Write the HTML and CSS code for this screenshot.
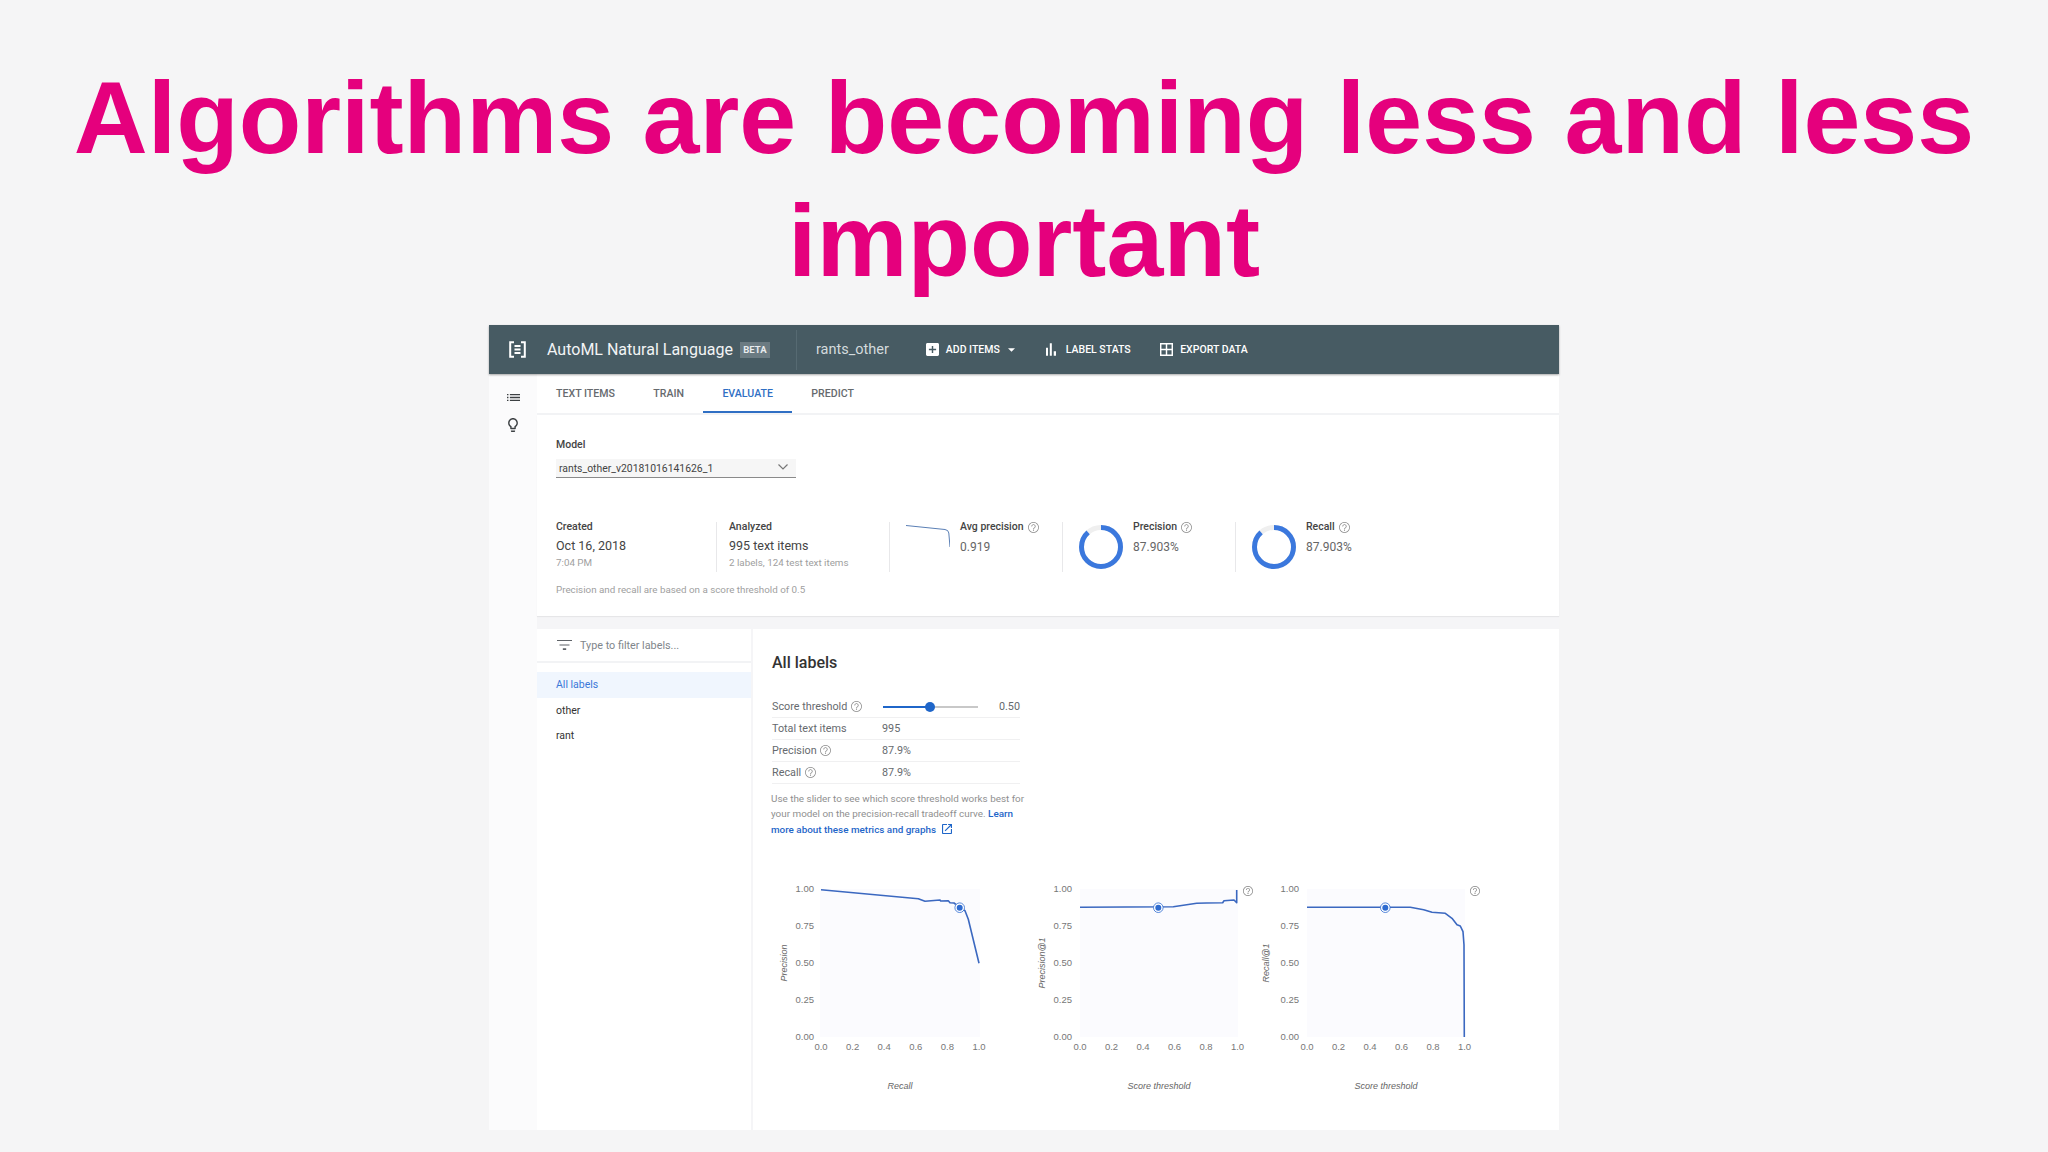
FILE: index.html
```html
<!DOCTYPE html>
<html lang="en">
<head>
<meta charset="utf-8">
<title>Algorithms are becoming less and less important</title>
<link rel="stylesheet" href="styles.css">
</head>
<body>
<svg class="defs" width="0" height="0" aria-hidden="true">
  <symbol id="help" viewBox="0 0 24 24"><path d="M11 18h2v-2h-2v2zm1-16C6.48 2 2 6.48 2 12s4.48 10 10 10 10-4.48 10-10S17.52 2 12 2zm0 18.6c-4.7 0-8.6-3.9-8.600-8.600S7.300 3.400 12 3.400s8.600 3.900 8.600 8.600-3.900 8.600-8.600 8.600zM12 6c-2.210 0-4 1.790-4 4h1.500c0-1.400 1.100-2.500 2.500-2.500s2.500 1.100 2.500 2.500c0 2-3.250 2-3.250 5h1.500c0-2.250 3.250-2.500 3.250-5 0-2.210-1.790-4-4-4z"/></symbol>
</svg>
<h1 class="title">Algorithms are becoming less and less important</h1>
<div class="app">
  <header class="topbar">
    <svg class="logo" viewBox="0 0 17 17"><path d="M5 1.200H1.200v14.600H5M12 1.200h3.800v14.600H12M5.500 5h6M5.500 8.500h6M5.500 12h6"/></svg>
    <span class="product">AutoML Natural Language</span>
    <span class="badge">BETA</span>
    <span class="project">rants_other</span>
    <span class="action action-add">
      <svg class="icon-add" viewBox="3 3 18 18"><path d="M19 3H5c-1.110 0-2 .9-2 2v14c0 1.100.89 2 2 2h14c1.100 0 2-.9 2-2V5c0-1.100-.9-2-2-2zm-2 10h-4v4h-2v-4H7v-2h4V7h2v4h4v2z"/></svg>
      ADD ITEMS
      <svg class="caret" viewBox="0 0 8 4"><path d="M0 0h8L4 4z"/></svg>
    </span>
    <span class="action action-stats">
      <svg class="icon-stats" viewBox="0 0 11 14"><path d="M0 5h2.200v9H0zM4.200 0h2.200v14H4.200zM8.500 9H11v5H8.500z"/></svg>
      LABEL STATS
    </span>
    <span class="action action-export">
      <svg class="icon-export" viewBox="3 3 18 18"><path d="M3 3v18h18V3H3zm8 16H5v-6h6v6zm0-8H5V5h6v6zm8 8h-6v-6h6v6zm0-8h-6V5h6v6z"/></svg>
      EXPORT DATA
    </span>
  </header>
  <div class="shell">
    <aside class="rail">
      <svg class="rail-icon" viewBox="3 6 18 12"><path d="M3 13h2v-2H3v2zm0 4h2v-2H3v2zm0-8h2V7H3v2zm4 4h14v-2H7v2zm0 4h14v-2H7v2zM7 7v2h14V7H7z"/></svg>
      <svg class="rail-bulb" viewBox="5 2 14 20"><path d="M9 21c0 .55.45 1 1 1h4c.55 0 1-.45 1-1v-1H9v1zm3-19C8.140 2 5 5.140 5 9c0 2.380 1.190 4.470 3 5.740V17c0 .55.45 1 1 1h6c.55 0 1-.45 1-1v-2.260c1.810-1.270 3-3.360 3-5.740 0-3.860-3.140-7-7-7zm2.850 11.100l-.85.6V16h-4v-2.300l-.85-.6C7.800 12.160 7 10.630 7 9c0-2.760 2.240-5 5-5s5 2.240 5 5c0 1.630-.8 3.160-2.150 4.100z"/></svg>
    </aside>
    <main class="content">
      <nav class="tabs">
        <span class="tab">TEXT ITEMS</span>
        <span class="tab">TRAIN</span>
        <span class="tab tab-active">EVALUATE</span>
        <span class="tab">PREDICT</span>
      </nav>
      <section class="summary">
        <div class="field-label">Model</div>
        <div class="select">
          <span>rants_other_v20181016141626_1</span>
          <svg class="chevron" viewBox="0 0 10 6"><path d="M.5.5 5 5 9.500.5"/></svg>
        </div>
        <div class="stats">
          <div class="stat stat-first">
            <div class="stat-label">Created</div>
            <div class="stat-value">Oct 16, 2018</div>
            <div class="stat-sub">7:04 PM</div>
          </div>
          <div class="stat stat-text">
            <div class="stat-label">Analyzed</div>
            <div class="stat-value">995 text items</div>
            <div class="stat-sub">2 labels, 124 test text items</div>
          </div>
          <div class="stat stat-graphic">
            <svg class="spark" viewBox="0 0 44 22"><path d="M0 .5 39 4.500Q42.500 5 42.800 8L44 22"/></svg>
            <div>
              <div class="stat-label">Avg precision <svg class="help"><use href="#help"/></svg></div>
              <div class="stat-value stat-value-small">0.919</div>
            </div>
          </div>
          <div class="stat stat-graphic">
            <svg class="donut" viewBox="0 0 44 44"><circle class="donut-track" cx="22" cy="22" r="19.500"/><circle class="donut-arc" cx="22" cy="22" r="19.500"/></svg>
            <div>
              <div class="stat-label">Precision <svg class="help"><use href="#help"/></svg></div>
              <div class="stat-value stat-value-small">87.903%</div>
            </div>
          </div>
          <div class="stat stat-graphic">
            <svg class="donut" viewBox="0 0 44 44"><circle class="donut-track" cx="22" cy="22" r="19.500"/><circle class="donut-arc" cx="22" cy="22" r="19.500"/></svg>
            <div>
              <div class="stat-label">Recall <svg class="help"><use href="#help"/></svg></div>
              <div class="stat-value stat-value-small">87.903%</div>
            </div>
          </div>
        </div>
        <p class="footnote">Precision and recall are based on a score threshold of 0.5</p>
      </section>
      <div class="split">
        <aside class="labels">
          <div class="filter">
            <svg class="filter-icon" viewBox="3 6 18 12"><path d="M10 18h4v-2h-4v2zM3 6v1.300h18V6H3zm3 6.700h12v-1.400H6v1.400z"/></svg>
            <span>Type to filter labels...</span>
          </div>
          <ul class="label-list">
            <li class="label-item label-active">All labels</li>
            <li class="label-item">other</li>
            <li class="label-item">rant</li>
          </ul>
        </aside>
        <section class="detail">
          <h2 class="detail-title">All labels</h2>
          <div class="metrics">
            <div class="metric">
              <span class="metric-name">Score threshold <svg class="help"><use href="#help"/></svg></span>
              <span class="slider"><span class="slider-fill"></span><span class="slider-knob"></span></span>
              <span class="metric-end">0.50</span>
            </div>
            <div class="metric"><span class="metric-name">Total text items</span><span>995</span></div>
            <div class="metric"><span class="metric-name">Precision <svg class="help"><use href="#help"/></svg></span><span>87.9%</span></div>
            <div class="metric"><span class="metric-name">Recall <svg class="help"><use href="#help"/></svg></span><span>87.9%</span></div>
          </div>
          <div class="hint">
            <div>Use the slider to see which score threshold works best for</div>
            <div>your model on the precision-recall tradeoff curve. <a class="hint-link">Learn</a></div>
            <div><a class="hint-link">more about these metrics and graphs <svg class="ext" viewBox="3 3 18 18"><path d="M19 19H5V5h7V3H5c-1.110 0-2 .9-2 2v14c0 1.100.89 2 2 2h14c1.100 0 2-.9 2-2v-7h-2v7zM14 3v2h3.590l-9.830 9.830 1.410 1.410L19 6.410V10h2V3h-7z"/></svg></a></div>
          </div>
          <div class="charts">
            <svg class="chart chart-wide" viewBox="0 0 258 215">
              <rect class="plot" x="48" y="4" width="160" height="148"/>
              <g class="ticks-y">
                <text x="42" y="7">1.00</text><text x="42" y="44">0.75</text><text x="42" y="81">0.50</text><text x="42" y="118">0.25</text><text x="42" y="155">0.00</text>
              </g>
              <g class="ticks-x">
                <text x="49" y="165">0.0</text><text x="80.600" y="165">0.2</text><text x="112.200" y="165">0.4</text><text x="143.800" y="165">0.6</text><text x="175.400" y="165">0.8</text><text x="207" y="165">1.0</text>
              </g>
              <text class="axis-y" transform="translate(15 78) rotate(-90)">Precision</text>
              <text class="axis-x" x="128" y="204">Recall</text>
              <path class="curve" d="M49 4.700 146.300 13.700 153 16.300 168 15 168.700 16 176.300 15.700 178 17.700 182 18 188 22.700 193 25.700 196.300 34.300 207 78.300"/>
              <circle class="marker-ring" cx="187.700" cy="22.700" r="4.800"/><circle class="marker-dot" cx="187.700" cy="22.700" r="3"/>
            </svg>
            <svg class="chart" viewBox="0 0 227 215">
              <rect class="plot" x="50" y="4" width="158" height="148"/>
              <g class="ticks-y">
                <text x="42" y="7">1.00</text><text x="42" y="44">0.75</text><text x="42" y="81">0.50</text><text x="42" y="118">0.25</text><text x="42" y="155">0.00</text>
              </g>
              <g class="ticks-x">
                <text x="50" y="165">0.0</text><text x="81.500" y="165">0.2</text><text x="113" y="165">0.4</text><text x="144.500" y="165">0.6</text><text x="176" y="165">0.8</text><text x="207.500" y="165">1.0</text>
              </g>
              <text class="axis-y" transform="translate(15 78) rotate(-90)">Precision@1</text>
              <text class="axis-x" x="129" y="204">Score threshold</text>
              <path class="curve" d="M50 22.300 143.300 21.700 166.700 18.300 176.700 18 192.700 17.700 194 15.700 204 15 206.700 17.700V5"/>
              <circle class="marker-ring" cx="128.300" cy="22.700" r="4.800"/><circle class="marker-dot" cx="128.300" cy="22.700" r="3"/>
              <use href="#help" class="chart-help" x="212" y="0" width="12" height="12"/>
            </svg>
            <svg class="chart" viewBox="0 0 227 215">
              <rect class="plot" x="50" y="4" width="158" height="148"/>
              <g class="ticks-y">
                <text x="42" y="7">1.00</text><text x="42" y="44">0.75</text><text x="42" y="81">0.50</text><text x="42" y="118">0.25</text><text x="42" y="155">0.00</text>
              </g>
              <g class="ticks-x">
                <text x="50" y="165">0.0</text><text x="81.500" y="165">0.2</text><text x="113" y="165">0.4</text><text x="144.500" y="165">0.6</text><text x="176" y="165">0.8</text><text x="207.500" y="165">1.0</text>
              </g>
              <text class="axis-y" transform="translate(12 78) rotate(-90)">Recall@1</text>
              <text class="axis-x" x="129" y="204">Score threshold</text>
              <path class="curve" d="M50 22.300H153.300L166.700 24.700 175 27.300 188.300 28.300 195 33.300 200 39.700 203.300 41 206 46.700 207 60 207.300 152"/>
              <circle class="marker-ring" cx="128.300" cy="22.700" r="4.800"/><circle class="marker-dot" cx="128.300" cy="22.700" r="3"/>
              <use href="#help" class="chart-help" x="212" y="0" width="12" height="12"/>
            </svg>
          </div>
        </section>
      </div>
    </main>
  </div>
</div>
</body>
</html>
```
FILE: styles.css
```css
* { box-sizing: border-box; }
html, body { margin: 0; height: 100%; }
body {
  background: #f5f5f6;
  font-family: Roboto, "Liberation Sans", sans-serif;
  overflow: hidden;
}
.defs { position: absolute; }
.title {
  margin: 0;
  padding: 56px 0 23px;
  font: 700 102.400px/123px "Liberation Sans", Arial, sans-serif;
  color: #e5007d;
  text-align: center;
}
.app { width: 1070px; height: 805px; margin-left: 489px; display: flex; flex-direction: column; }

/* top bar */
.topbar {
  height: 49px;
  flex: none;
  background: #475b63;
  box-shadow: 0 1px 2px rgba(0,0,0,.35);
  display: flex;
  align-items: center;
  color: #fff;
  padding-left: 20px;
  position: relative;
}
.logo { width: 17px; height: 17px; fill: none; stroke: #fff; stroke-width: 2; }
.product { margin-left: 21px; font-size: 16px; color: #f2f4f5; }
.badge {
  margin-left: 7px;
  width: 30px;
  height: 16px;
  background: rgba(255,255,255,.2);
  font-size: 9.500px;
  font-weight: 700;
  line-height: 16px;
  text-align: center;
  color: #e8ecee;
}
.project {
  margin-left: 26px;
  height: 40px;
  line-height: 40px;
  padding-left: 19px;
  border-left: 1px solid #566a72;
  font-size: 14.500px;
  color: #d3dadd;
}
.action { display: flex; align-items: center; font-size: 10.500px; font-weight: 500; color: #fff; }
.action-add { margin-left: 37px; gap: 7px; }
.action-stats { margin-left: 31px; gap: 10px; }
.action-export { margin-left: 29px; gap: 7.500px; }
.icon-add, .icon-export { width: 13px; height: 13px; fill: #fff; }
.icon-stats { width: 10px; height: 13px; fill: #fff; }
.caret { width: 7px; height: 4px; fill: #fff; margin-left: 1px; }

.shell { flex: 1; display: flex; min-height: 0; }

/* icon rail */
.rail {
  width: 48px;
  flex: none;
  background: #fbfbfc;
  display: flex;
  flex-direction: column;
  align-items: center;
  padding: 19px 0 0;
}
.rail-icon { width: 13px; height: 9px; fill: #3c4043; }
.rail-bulb { width: 10px; height: 14px; margin-top: 16px; fill: #3c4043; }

.content { flex: 1; display: flex; flex-direction: column; min-width: 0; background: #f5f5f7; }

/* tabs */
.tabs {
  height: 41px;
  flex: none;
  background: #fff;
  border-bottom: 2px solid #f2f3f5;
  display: flex;
}
.tab {
  height: 39px;
  padding: 13px 19.200px 0;
  font-size: 10.600px;
  font-weight: 500;
  line-height: 13px;
  color: #666a6e;
}
.tab:first-child { padding-left: 19px; }
.tab-active { color: #2f6fc4; border-bottom: 2px solid #2f6fc4; }

/* summary */
.summary {
  height: 201px;
  flex: none;
  background: #fff;
  box-shadow: 0 1px 1px rgba(0,0,0,.06);
  padding: 23px 0 0 19px;
}
.field-label { font-size: 10.500px; line-height: 14px; font-weight: 500; color: #444; }
.select {
  width: 240px;
  height: 19px;
  margin-top: 7px;
  background: #f6f6f6;
  border-bottom: 1.500px solid #8a8a8a;
  display: flex;
  align-items: center;
  justify-content: space-between;
  padding: 0 8px 0 3px;
  font-size: 10.400px;
  color: #444;
}
.chevron { width: 10px; height: 6px; fill: none; stroke: #777; stroke-width: 1.200; margin-bottom: 2px; }
.stats { display: flex; margin-top: 44px; height: 50px; }
.stat { width: 173px; height: 50px; flex: none; border-left: 1px solid #e8e8ea; padding-left: 12px; }
.stat-first { width: 160px; border-left: 0; padding-left: 0; }
.stat-graphic { display: flex; padding-left: 16px; gap: 10px; }
.stat-label { margin-top: -2px; font-size: 10.500px; line-height: 14px; font-weight: 500; color: #444; display: flex; align-items: center; gap: 3px; }
.stat-value { margin-top: 3px; font-size: 12.500px; line-height: 18px; color: #444; }
.stat-value-small { margin-top: 4px; font-size: 12px; color: #666; }
.stat-sub { margin-top: 2px; font-size: 9.800px; line-height: 12px; color: #a0a0a0; }
.help { width: 13px; height: 13px; fill: #8a8a8a; flex: none; display: inline-block; vertical-align: -3px; }
.spark { width: 44px; height: 22px; margin-top: 3px; fill: none; stroke: #5a7fb5; stroke-width: 1; flex: none; }
.donut { width: 44px; height: 44px; margin-top: 3px; flex: none; transform: rotate(-90deg); fill: none; stroke-width: 5; }
.donut-track { stroke: #efefef; }
.donut-arc { stroke: #3b78dd; stroke-dasharray: 107.700 122.500; }
.footnote { margin: 11px 0 0; font-size: 9.800px; line-height: 14px; color: #a0a0a0; }

/* split */
.split { flex: 1; display: flex; margin-top: 13px; gap: 2px; min-height: 0; }
.labels { width: 214px; flex: none; background: #fff; }
.filter {
  height: 34px;
  border-bottom: 2px solid #f2f3f5;
  display: flex;
  align-items: center;
  padding-left: 20px;
  gap: 8px;
  font-size: 10.800px;
  color: #80868b;
}
.filter-icon { width: 15px; height: 10px; fill: #5f6368; }
.label-list { list-style: none; margin: 9px 0 0; padding: 0; }
.label-item { height: 25.700px; line-height: 25.700px; padding-left: 19px; font-size: 10.500px; color: #333; }
.label-active { background: #f0f6fe; color: #3b78d8; }

.detail { flex: 1; background: #fff; padding: 0 0 0 19px; min-width: 0; }
.detail-title { margin: 24px 0 0; font-size: 16px; line-height: 20px; font-weight: 500; color: #333; }
.metrics { width: 248px; margin-top: 23px; }
.metric {
  height: 22px;
  display: flex;
  align-items: center;
  border-bottom: 1.500px solid #f0f0f1;
  font-size: 10.800px;
  color: #666a6e;
}
.metric-name { width: 110px; flex: none; }
.slider { width: 95px; height: 2px; background: #c8c8c8; position: relative; flex: none; margin-left: 1px; }
.slider-fill { position: absolute; left: 0; top: 0; height: 2px; width: 47px; background: #1f66c9; }
.slider-knob { position: absolute; left: 42px; top: -4px; width: 10px; height: 10px; border-radius: 50%; background: #1f66c9; }
.metric-end { margin-left: auto; }
.hint { width: 262px; margin: 7px 0 0 -1px; font-size: 9.900px; line-height: 15.400px; color: #8f8f8f; white-space: nowrap; }
.hint-link { color: #1f66c9; font-weight: 500; }
.ext { width: 10px; height: 10px; fill: #1f66c9; margin-left: 4px; vertical-align: -1px; }

/* charts */
.charts { display: flex; margin-top: 48px; }
.chart { width: 227px; height: 215px; flex: none; overflow: visible; font-family: "Liberation Sans", Arial, sans-serif; font-size: 9.500px; }
.chart-wide { width: 258px; }
.plot { fill: #fbfbfe; }
.ticks-y text { text-anchor: end; fill: #777; }
.ticks-x text { text-anchor: middle; fill: #777; }
.axis-y, .axis-x { text-anchor: middle; font-style: italic; fill: #666; font-size: 9px; }
.curve { fill: none; stroke: #3b68c0; stroke-width: 1.600; stroke-linejoin: round; }
.marker-ring { fill: #fff; stroke: #2e6bd0; stroke-width: .8; }
.marker-dot { fill: #2e6bd0; }
.chart-help { fill: #8a8a8a; }
```
